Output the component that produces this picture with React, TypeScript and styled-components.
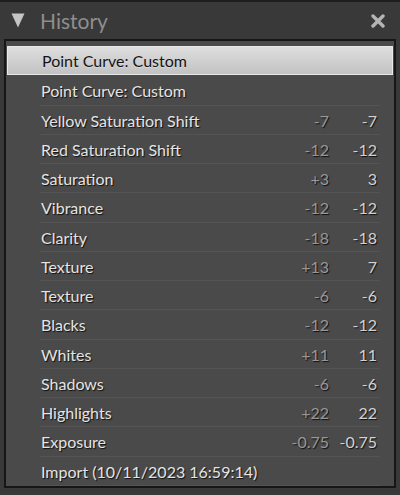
import React, { FC } from 'react';
import styled, { createGlobalStyle } from 'styled-components';

const GlobalStyle = createGlobalStyle`
  html, body {
    margin: 0;
    padding: 0;
    background: #383838;
  }
`;

const Panel = styled.div`
  width: 400px;
  height: 495px;
  box-sizing: border-box;
  background: #393939;
  border-top: 2px solid #1f1f1f;
  font-family: Lato, "Open Sans", sans-serif;
  display: flex;
  flex-direction: column;
`;

const Header = styled.div`
  height: 37px;
  display: flex;
  align-items: center;
  padding: 0 15px 0 11px;
`;

const Title = styled.div`
  flex: 1;
  margin-left: 15px;
  font-size: 21px;
  color: #8e8e8e;
  padding-bottom: 1px;
`;

const List = styled.div`
  margin: 0 4px;
  height: 449px;
  box-sizing: border-box;
  border: 2px solid #161616;
  background: #4a4a4a;
  padding: 5px 1px 0;
`;

const Row = styled.div<{ $active?: boolean }>`
  height: 29.25px;
  box-sizing: border-box;
  display: grid;
  grid-template-columns: 1fr 60px 48px;
  align-items: center;
  padding: 0 16px 0 34px;
  font-size: 16px;
  position: relative;
  color: ${(p) => (p.$active ? '#141414' : '#e4e4e4')};
  text-shadow: ${(p) => (p.$active ? '0 1px 0 rgba(255,255,255,0.3)' : '1px 1px 1px rgba(0,0,0,0.8)')};
  background: ${(p) => (p.$active ? 'linear-gradient(#dedede, #c2c2c2)' : 'transparent')};
  border: ${(p) => (p.$active ? '1px solid #e8e8e8' : 'none')};
  margin: ${(p) => (p.$active ? '0 0 1px' : '0')};

  &::after {
    content: '';
    display: ${(p) => (p.$active ? 'none' : 'block')};
    position: absolute;
    left: 33px;
    right: 13px;
    bottom: 0;
    height: 1px;
    background: rgba(255, 255, 255, 0.06);
  }
`;

const Label = styled.span`
  white-space: nowrap;
`;

const Value = styled.span<{ $dim?: boolean }>`
  text-align: right;
  color: ${(p) => (p.$dim ? '#989898' : '#d2d2d2')};
`;

type Step = { label: string; before?: string; after?: string };

const steps: Step[] = [
  { label: 'Point Curve: Custom' },
  { label: 'Point Curve: Custom' },
  { label: 'Yellow Saturation Shift', before: '-7', after: '-7' },
  { label: 'Red Saturation Shift', before: '-12', after: '-12' },
  { label: 'Saturation', before: '+3', after: '3' },
  { label: 'Vibrance', before: '-12', after: '-12' },
  { label: 'Clarity', before: '-18', after: '-18' },
  { label: 'Texture', before: '+13', after: '7' },
  { label: 'Texture', before: '-6', after: '-6' },
  { label: 'Blacks', before: '-12', after: '-12' },
  { label: 'Whites', before: '+11', after: '11' },
  { label: 'Shadows', before: '-6', after: '-6' },
  { label: 'Highlights', before: '+22', after: '22' },
  { label: 'Exposure', before: '-0.75', after: '-0.75' },
  { label: 'Import (10/11/2023 16:59:14)' },
];

const Triangle: FC = () => (
  <svg width="14" height="15" viewBox="0 0 14 15">
    <path d="M0.5 0.5 H13.5 L7 14.5 Z" fill="#c4c4c4" />
  </svg>
);

const CloseIcon: FC = () => (
  <svg width="14" height="14" viewBox="0 0 14 14">
    <path d="M2 2 L12 12 M12 2 L2 12" stroke="#b4b4b4" strokeWidth="3.4" strokeLinecap="round" />
  </svg>
);

const App: FC = () => {
  return (
    <>
      <GlobalStyle />
      <Panel>
        <Header>
          <Triangle />
          <Title>History</Title>
          <CloseIcon />
        </Header>
        <List>
          {steps.map((s, i) => (
            <Row key={i} $active={i === 0}>
              <Label>{s.label}</Label>
              <Value $dim>{s.before}</Value>
              <Value>{s.after}</Value>
            </Row>
          ))}
        </List>
      </Panel>
    </>
  );
};

export default App;
